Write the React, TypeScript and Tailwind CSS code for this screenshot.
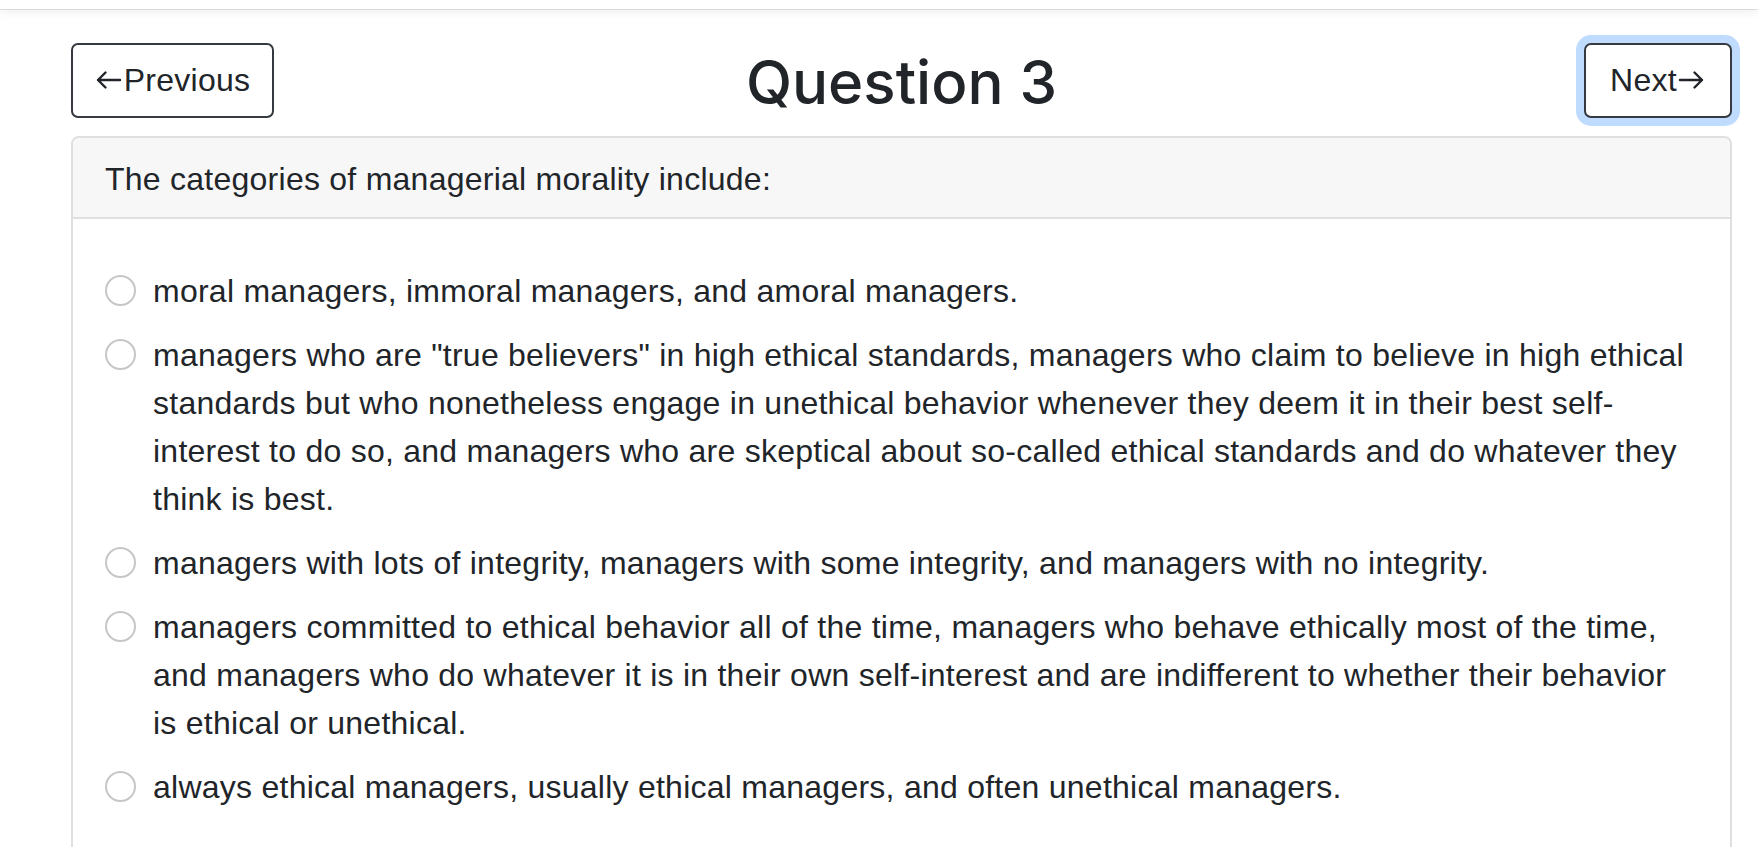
import { useState } from "react";

const options = [
  "moral managers, immoral managers, and amoral managers.",
  'managers who are "true believers" in high ethical standards, managers who claim to believe in high ethical standards but who nonetheless engage in unethical behavior whenever they deem it in their best self-interest to do so, and managers who are skeptical about so-called ethical standards and do whatever they think is best.',
  "managers with lots of integrity, managers with some integrity, and managers with no integrity.",
  "managers committed to ethical behavior all of the time, managers who behave ethically most of the time, and managers who do whatever it is in their own self-interest and are indifferent to whether their behavior is ethical or unethical.",
  "always ethical managers, usually ethical managers, and often unethical managers.",
];

function Arrow({ dir }: { dir: "left" | "right" }) {
  return (
    <svg
      width="29"
      height="20"
      viewBox="0 0 29 20"
      fill="none"
      stroke="#212529"
      strokeWidth="2.4"
      strokeLinecap="round"
      strokeLinejoin="round"
      className="shrink-0"
    >
      {dir === "left" ? (
        <path d="M3 10H25M10.5 2.5L3 10l7.5 7.5" />
      ) : (
        <path d="M3 10H25M17.5 2.5L25 10l-7.5 7.5" />
      )}
    </svg>
  );
}

export default function App() {
  const [selected, setSelected] = useState<number | null>(null);

  return (
    <main className="min-h-screen bg-white text-[#212529] font-['Liberation_Sans',Arial,sans-serif]">
      {/* header shadow left from the page bar */}
      <div className="h-[10px] border-b border-[#dcdcdf] shadow-[0_3px_8px_rgba(0,0,0,0.06)]" />

      <div className="pl-[71px] pr-[26px]">
        <div className="mt-[33px] grid h-[75px] grid-cols-[1fr_auto_1fr] items-center">
          <div>
            <button className="flex h-[75px] w-[203px] items-center justify-center rounded-[7px] border-2 border-[#343a40] bg-white pb-[2px] text-[32px] leading-[48px] tracking-[0.25px]">
              <Arrow dir="left" />
              Previous
            </button>
          </div>
          <h2 className="pt-[2px] font-['Inter',sans-serif] text-[60px] font-medium leading-[72px]">
            Question 3
          </h2>
          <div className="flex justify-end">
            <button className="flex h-[75px] w-[148px] items-center justify-center rounded-[7px] border-2 border-[#343a40] bg-white pb-[2px] text-[32px] leading-[48px] tracking-[0.25px] shadow-[0_0_0_8px_#bfdcff]">
              Next
              <Arrow dir="right" />
            </button>
          </div>
        </div>

        {/* Question card */}
        <div className="mt-[18px] rounded-[8px] border-2 border-[#dfdfdf]">
          <div className="rounded-t-[6px] border-b-2 border-[#dfdfdf] bg-[#f7f7f7] px-8 pt-[17px] pb-[14px] text-[32px] leading-[48px] tracking-[0.25px]">
            The categories of managerial morality include:
          </div>

          <div className="px-8 pt-12 pb-12">
            {options.map((text, i) => (
              <label
                key={i}
                onClick={() => setSelected(i)}
                className="mb-4 flex cursor-pointer items-start gap-[17px]"
              >
                <span className="mt-[8px] flex h-[31px] w-[31px] shrink-0 items-center justify-center rounded-full border-2 border-[#c6c6c6] bg-white">
                  {selected === i && (
                    <span className="h-[13px] w-[13px] rounded-full bg-[#007bff]" />
                  )}
                </span>
                <span className="text-[32px] leading-[48px] tracking-[0.25px]">
                  {text}
                </span>
              </label>
            ))}
          </div>
        </div>
      </div>
    </main>
  );
}
